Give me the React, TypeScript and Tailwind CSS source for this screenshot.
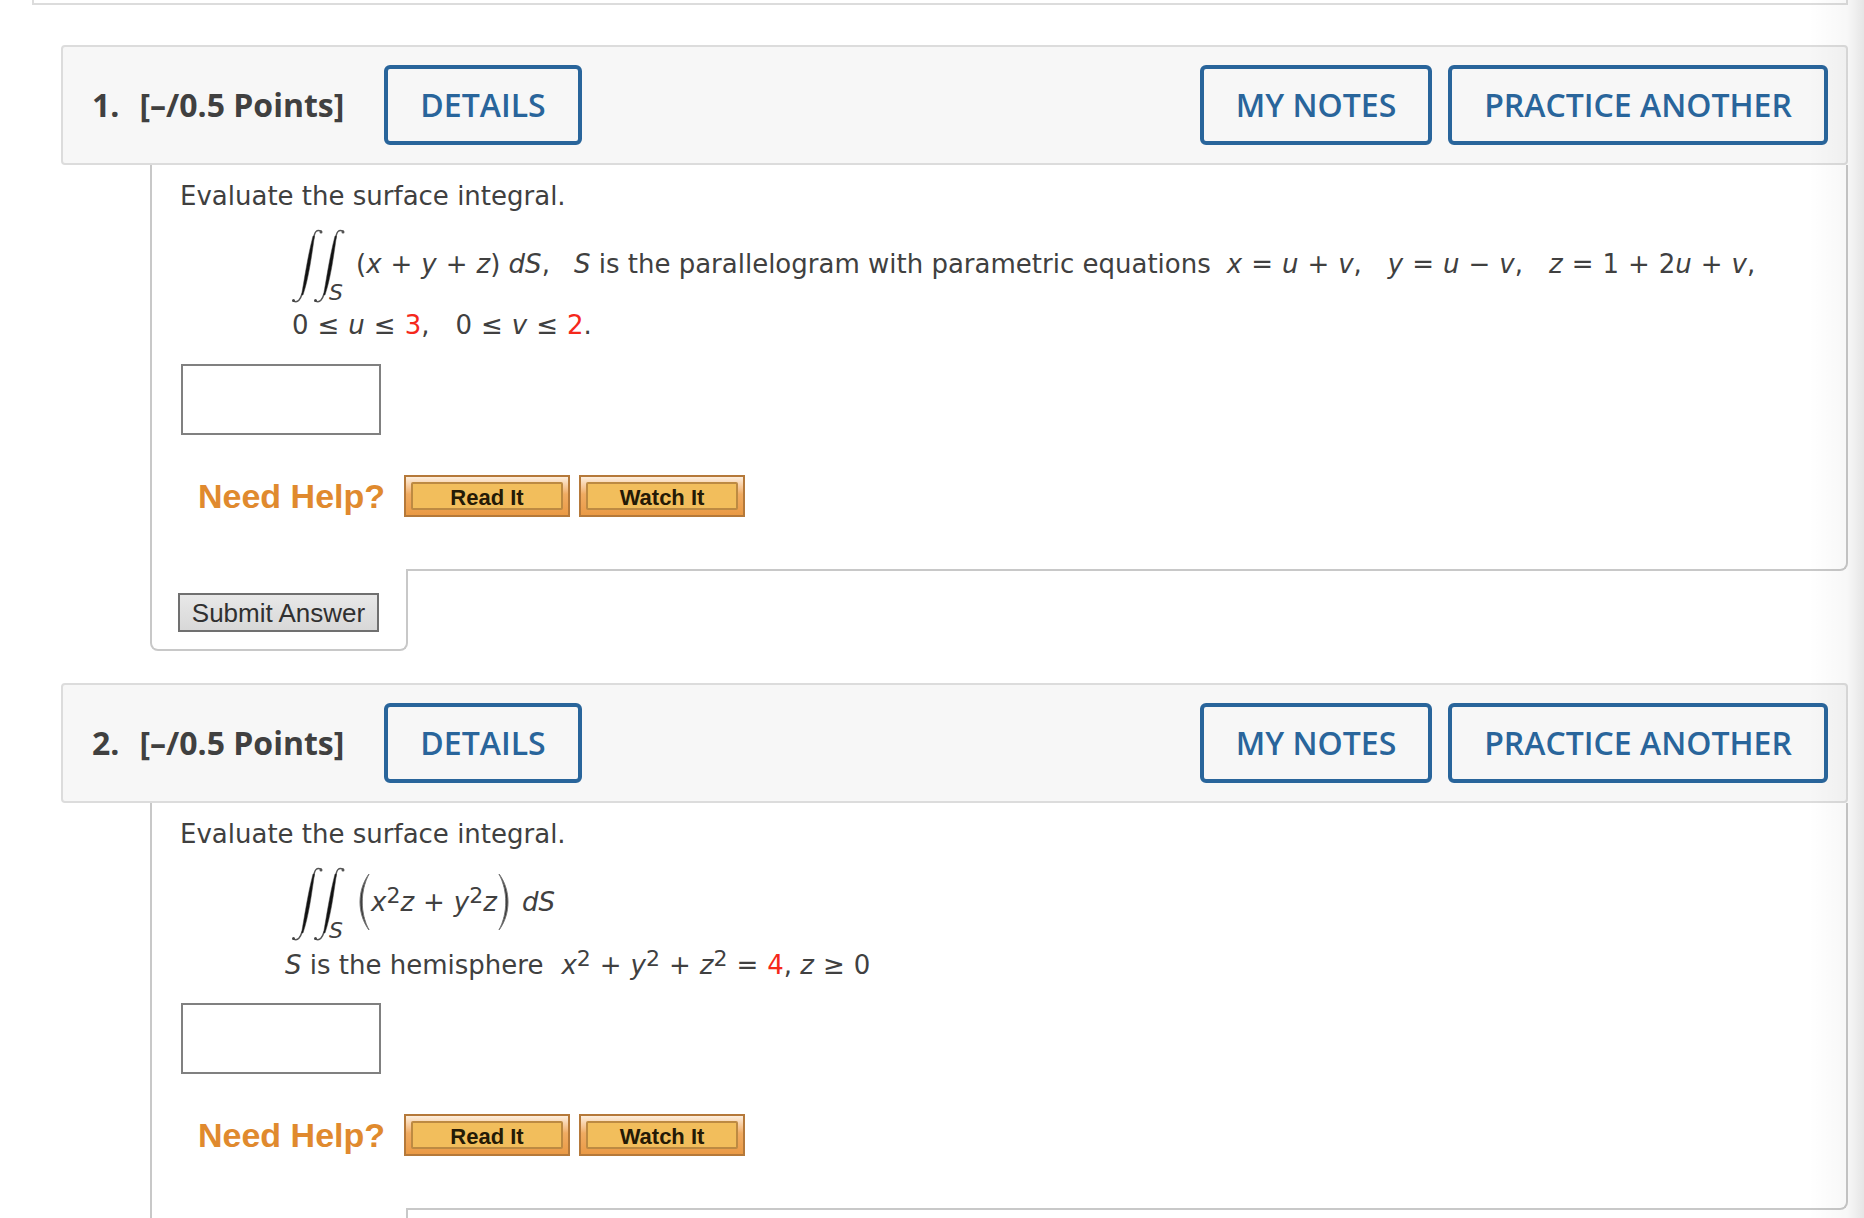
import type { ReactNode } from "react";

const outlineButton =
  "h-20 rounded-md border-4 border-[#29659b] bg-transparent font-['Open_Sans',sans-serif] text-[32px] leading-10 font-semibold text-[#29659b]";

const helpButton =
  "flex h-[42px] w-[166px] border-2 border-[#b5793a] bg-linear-to-b from-[#fdeedd] via-[#f0ac62] via-45% to-[#ea9a45] p-[5px] font-['Liberation_Sans',Arial,sans-serif] text-[22px] leading-5 font-bold text-[#241a06]";

function Red({ children }: { children: ReactNode }) {
  return <span className="text-[#f5281b]">{children}</span>;
}

function Sup({ children }: { children: ReactNode }) {
  return <span className="relative -top-2 text-[22px] leading-none not-italic">{children}</span>;
}

function Op({ children }: { children: ReactNode }) {
  return <span className="mx-[9px] not-italic">{children}</span>;
}

function IntegralStroke({ x }: { x: number }) {
  return (
    <g transform={`translate(${x} 0)`}>
      <path
        d="M1.500 72 C6 74.500 8.500 70 10 65 M21.500 10 C22.500 3 24.500 0 29 2"
        fill="none"
        stroke="#555"
        strokeWidth="1.500"
        strokeLinecap="round"
      />
      <path d="M9.500 66 C12.500 50 15.500 28 21 7 L22.500 7 C19.500 28 16.500 50 11 66 Z" fill="#111" stroke="#444" strokeWidth="0.500" />
      <circle cx="1.500" cy="71.500" r="1.500" fill="#444" />
      <circle cx="29" cy="3" r="1.500" fill="#555" />
    </g>
  );
}

function SurfaceIntegral() {
  return (
    <span className="relative block h-[74px] w-[54px] shrink-0">
      <svg className="block h-[74px] w-[54px]" viewBox="0 0 54 74" aria-hidden="true">
        <IntegralStroke x={0} />
        <IntegralStroke x={22} />
      </svg>
      <i className="absolute -bottom-0.5 left-[37px] text-[22px] leading-6">S</i>
    </span>
  );
}

function BigParen({ close = false }: { close?: boolean }) {
  return (
    <svg className="block h-[58px] w-3 shrink-0" viewBox="0 0 12 58" aria-hidden="true">
      <path
        d={close ? "M1 1 C13 17 13 41 1 57 C10 40 10 18 1 1 Z" : "M11 1 C-1 17 -1 41 11 57 C2 40 2 18 11 1 Z"}
        fill="#333"
        stroke="#777"
        strokeWidth="1"
      />
    </svg>
  );
}

function Question({ number, children }: { number: number; children: ReactNode }) {
  return (
    <section className="mb-8">
      <header className="mr-4 ml-[61px] flex h-[120px] items-center rounded border-2 border-[#dcdcdc] bg-[#f7f7f7] pr-[18px] pl-[29px]">
        <h2 className="flex w-[292px] gap-5 font-['Open_Sans',sans-serif] text-[32px] leading-10 font-bold text-[#404040]">
          <span>{number}.</span>
          <span className="whitespace-nowrap">[–/0.5 Points]</span>
        </h2>
        <button type="button" className={`${outlineButton} w-[198px]`}>
          DETAILS
        </button>
        <div className="ml-auto flex gap-4">
          <button type="button" className={`${outlineButton} w-[232px]`}>
            MY NOTES
          </button>
          <button type="button" className={`${outlineButton} w-[380px]`}>
            PRACTICE ANOTHER
          </button>
        </div>
      </header>
      <form className="mr-4 ml-[150px]" onSubmit={(e) => e.preventDefault()}>
        <div className="rounded-br-lg border-x-2 border-b-2 border-[#c8c8c8] pt-[15px] pb-[52px] pl-7 text-[26px] leading-8 text-[#404040]">
          <p>Evaluate the surface integral.</p>
          {children}
          <input
            type="text"
            aria-label={`Answer to question ${number}`}
            className="ml-px block h-[71px] w-[200px] border-2 border-[#808080] bg-white px-3 outline-none"
          />
          <div className="mt-10 ml-[18px] flex items-center">
            <span className="w-[206px] font-['Liberation_Sans',Arial,sans-serif] text-[34px] leading-10 font-bold whitespace-nowrap text-[#e08a2e]">
              Need Help?
            </span>
            <div className="flex gap-[9px]">
              {["Read It", "Watch It"].map((label) => (
                <button key={label} type="button" className={helpButton}>
                  <span className="flex h-full w-full items-center justify-center rounded-xs border-2 border-[#bd8a42] bg-[#f2be5c] pt-1">
                    {label}
                  </span>
                </button>
              ))}
            </div>
          </div>
        </div>
        <div className="-mt-0.5 h-[82px] w-[258px] rounded-b-lg border-x-2 border-b-2 border-[#c8c8c8] bg-white pt-6 pl-[26px]">
          <button
            type="submit"
            className="block h-[39px] w-[201px] border-2 border-[#707070] bg-linear-to-b from-[#e8e8e8] to-[#d8d8d8] font-['Liberation_Sans',Arial,sans-serif] text-[26px] leading-8 text-[#303030]"
          >
            Submit Answer
          </button>
        </div>
      </form>
    </section>
  );
}

export default function App() {
  return (
    <main className="relative min-h-screen overflow-hidden bg-white font-['DejaVu_Sans',Verdana,sans-serif]">
      <div className="mr-4 mb-10 ml-8 h-[5px] border-x-2 border-b-2 border-[#dcdcdc]" />

      <Question number={1}>
        <div className="mt-[17px] ml-28 flex items-center whitespace-nowrap">
          <SurfaceIntegral />
          <p className="flex pb-1 pl-2.5">
            <span>
              (<i>x</i>
              <Op>+</Op>
              <i>y</i>
              <Op>+</Op>
              <i>z</i>) <i>dS</i>,
            </span>
            <span className="pl-6">
              <i>S</i> is the parallelogram with parametric equations
            </span>
            <span className="pl-4">
              <i>x</i>
              <Op>=</Op>
              <i>u</i>
              <Op>+</Op>
              <i>v</i>,
            </span>
            <span className="pl-[26px]">
              <i>y</i>
              <Op>=</Op>
              <i>u</i>
              <Op>−</Op>
              <i>v</i>,
            </span>
            <span className="pl-[26px]">
              <i>z</i>
              <Op>=</Op>1<Op>+</Op>2<i>u</i>
              <Op>+</Op>
              <i>v</i>,
            </span>
          </p>
        </div>
        <p className="mt-1.5 mb-[23px] ml-28 flex gap-[26px]">
          <span>
            0<Op>≤</Op>
            <i>u</i>
            <Op>≤</Op>
            <Red>3</Red>,
          </span>
          <span>
            0<Op>≤</Op>
            <i>v</i>
            <Op>≤</Op>
            <Red>2</Red>.
          </span>
        </p>
      </Question>

      <Question number={2}>
        <div className="mt-[17px] ml-28 flex items-center whitespace-nowrap">
          <SurfaceIntegral />
          <div className="flex items-center pb-1 pl-3">
            <BigParen />
            <i className="px-px">
              x<Sup>2</Sup>z<Op>+</Op>y<Sup>2</Sup>z
            </i>
            <BigParen close />
            <i className="pl-3">dS</i>
          </div>
        </div>
        <p className="mt-2 mb-[22px] ml-[105px] flex gap-[18px]">
          <span>
            <i>S</i> is the hemisphere
          </span>
          <span>
            <i>x</i>
            <Sup>2</Sup>
            <Op>+</Op>
            <i>y</i>
            <Sup>2</Sup>
            <Op>+</Op>
            <i>z</i>
            <Sup>2</Sup>
            <Op>=</Op>
            <Red>4</Red>, <i>z</i>
            <Op>≥</Op>0
          </span>
        </p>
      </Question>

      <div className="pointer-events-none absolute inset-y-0 right-0 w-14 bg-linear-to-r from-black/0 via-black/3 via-70% to-black/10" />
    </main>
  );
}
